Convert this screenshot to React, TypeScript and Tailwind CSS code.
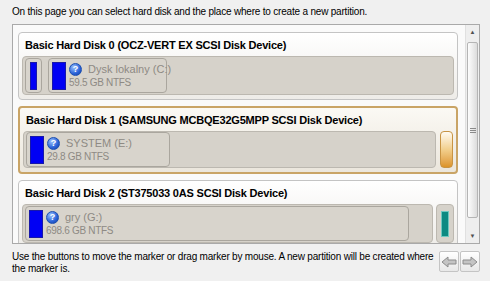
import React from 'react';

interface Part {
  label: string;
  size: string;
  width: number;
}

const HelpIcon = () => (
  <span className="flex h-[13px] w-[13px] shrink-0 items-center justify-center rounded-full border border-[#1c4fb0] bg-[radial-gradient(circle_at_35%_30%,#9cc4ff,#2a62d8_60%,#143c9c)] text-[9px] font-bold leading-none text-white">
    ?
  </span>
);

const BlueBar = ({ w }: { w: number }) => (
  <div
    className="h-[28px] shrink-0 border border-[#1818a8] bg-[#0000f4]"
    style={{ width: w }}
  />
);

const Partition = ({ part }: { part: Part }) => (
  <div
    className="flex h-[35px] shrink-0 items-center rounded-[4px] border border-[#aaa69e] bg-[#d8d4cc] pl-[3px]"
    style={{ width: part.width }}
  >
    <BlueBar w={14} />
    <div className="ml-[3px] flex flex-col items-start whitespace-nowrap">
      <div className="flex items-center gap-[6px]">
        <HelpIcon />
        <span className="text-[11px] leading-[14px] text-[#8e8a84]">{part.label}</span>
      </div>
      <span className="mt-[1px] text-[10px] leading-[12px] tracking-[-0.3px] text-[#8e8a84]">{part.size}</span>
    </div>
  </div>
);

const Card = ({
  title,
  selected,
  children,
}: {
  title: string;
  selected?: boolean;
  children: React.ReactNode;
}) => (
  <div
    className={`flex h-[68px] shrink-0 flex-col rounded-[4px] px-[3px] pb-[4px] ${
      selected
        ? 'border-2 border-[#c9a466] bg-gradient-to-b from-[#fbf9f4] to-[#ebe6dc]'
        : 'border border-[#c4c4c4] bg-gradient-to-b from-white to-[#eeece8]'
    }`}
  >
    <div className="mt-[4px] h-[17px] pl-[3px] text-[11px] font-bold leading-[17px] tracking-[-0.2px] text-black">
      {title}
    </div>
    <div className="mt-[2px] flex flex-1 items-stretch gap-[3px]">{children}</div>
  </div>
);

const ArrowBtn = ({ dir }: { dir: 'left' | 'right' }) => (
  <div className="flex h-[21px] w-[20px] items-center justify-center rounded-[2px] border border-[#c4c4c4] bg-gradient-to-b from-white to-[#e8e8e8]">
    <svg width="16" height="12" viewBox="0 0 16 12">
      <polygon
        points={dir === 'left' ? '1,6 7,1 7,4 15,4 15,8 7,8 7,11' : '15,6 9,1 9,4 1,4 1,8 9,8 9,11'}
        fill="#c4c4c4"
        stroke="#8c8c8c"
        strokeWidth="1"
        strokeLinejoin="round"
      />
    </svg>
  </div>
);

export default function App() {
  return (
    <div className="h-[281px] w-[490px] overflow-hidden bg-[#f0f0f0] font-['Liberation_Sans',Arial,sans-serif] text-[11px] text-black">
      <p className="px-3 pt-[5px] text-[10px] leading-[14px] tracking-[-0.2px]">
        On this page you can select hard disk and the place where to create a new partition.
      </p>

      <div className="ml-3 mt-[5px] flex h-[220px] w-[468px] overflow-hidden border border-[#a9a9a9] bg-[#fafafa]">
        <div className="flex flex-1 flex-col gap-[6px] overflow-hidden pl-[5px] pr-[7px] pt-[7px]">
          {/* Disk 0 */}
          <Card title="Basic Hard Disk 0 (OCZ-VERT EX SCSI Disk Device)">
            <div className="flex flex-1 items-center gap-[6px] rounded-[4px] border border-[#bcb8b0] bg-[#d6d2ca] px-[2px]">
              <div className="flex h-[35px] w-[17px] items-center justify-center rounded-[4px] border border-[#aaa69e] bg-[#d8d4cc]">
                <div className="h-[28px] w-[7px] border border-[#1818a8] bg-[#0000f4]" />
              </div>
              <Partition part={{ label: 'Dysk lokalny (C:)', size: '59.5 GB NTFS', width: 119 }} />
            </div>
          </Card>

          {/* Disk 1 */}
          <Card title="Basic Hard Disk 1 (SAMSUNG MCBQE32G5MPP SCSI Disk Device)" selected>
            <div className="flex flex-1 items-center rounded-[4px] border border-[#bcb8b0] bg-[#d6d2ca] px-[2px]">
              <Partition part={{ label: 'SYSTEM (E:)', size: '29.8 GB NTFS', width: 144 }} />
            </div>
            <div className="ml-[1px] w-[13px] rounded-[4px] border border-[#c89444] bg-gradient-to-b from-[#fffbf2] via-[#f2cf8c] to-[#dc9426]" />
          </Card>

          {/* Disk 2 */}
          <Card title="Basic Hard Disk 2 (ST375033 0AS SCSI Disk Device)">
            <div className="flex flex-1 items-center rounded-[4px] border border-[#bcb8b0] bg-[#d6d2ca] px-[2px]">
              <Partition part={{ label: 'gry (G:)', size: '698.6 GB NTFS', width: 384 }} />
            </div>
            <div className="flex w-[18px] items-center justify-center rounded-[4px] border border-[#bcb8b0] bg-[#d6d2ca]">
              <div className="h-[26px] w-[8px] border border-[#6cc8c0] bg-[#0c8a82]" />
            </div>
          </Card>
        </div>

        {/* scrollbar */}
        <div className="flex w-[14px] flex-col border-l border-[#e0e0e0] bg-[#eeeeee]">
          <div className="flex h-[14px] items-center justify-center text-[6px] text-[#505050]">▲</div>
          <div className="mx-[1px] mt-[3px] flex h-[176px] items-center justify-center rounded-[2px] border border-[#b4b4b4] bg-gradient-to-r from-[#fdfdfd] to-[#dcdcdc]">
            <div className="flex flex-col gap-[1px]">
              <div className="h-[1px] w-[6px] bg-[#8a8a8a]" />
              <div className="h-[1px] w-[6px] bg-[#8a8a8a]" />
              <div className="h-[1px] w-[6px] bg-[#8a8a8a]" />
            </div>
          </div>
          <div className="mt-auto flex h-[14px] items-center justify-center text-[6px] text-[#505050]">▼</div>
        </div>
      </div>

      <div className="ml-3 mt-[7px] flex w-[468px] items-start justify-between">
        <p className="text-[10px] leading-[12px] tracking-[-0.2px]">
          Use the buttons to move the marker or drag marker by mouse. A new partition will be created where
          <br />
          the marker is.
        </p>
        <div className="flex gap-[1px]">
          <ArrowBtn dir="left" />
          <ArrowBtn dir="right" />
        </div>
      </div>
    </div>
  );
}
